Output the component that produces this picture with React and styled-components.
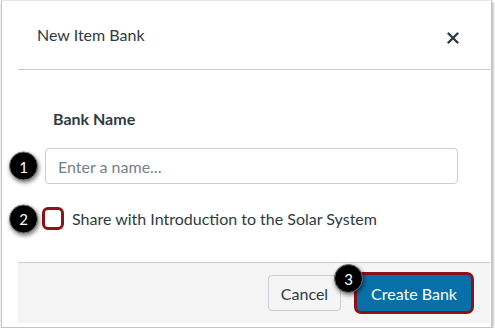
import React from "react";
import styled, { createGlobalStyle } from "styled-components";

const Global = createGlobalStyle`
  body {
    margin: 0;
    background: #ffffff;
    font-family: Lato, "Open Sans", sans-serif;
  }
`;

export default function App() {
  return (
    <>
      <Global />
      <Frame>
        <Dialog>
          <Header>
            <Title>New Item Bank</Title>
            <Close aria-label="Close">
              <svg width="12" height="12" viewBox="0 0 12 12">
                <path d="M1.5 1.5 L10.5 10.5 M10.5 1.5 L1.5 10.5" stroke="#2d3b45" strokeWidth="2.4" strokeLinecap="round" />
              </svg>
            </Close>
          </Header>
          <Body>
            <Label>Bank Name</Label>
            <Row>
              <Badge $left={-36}>1</Badge>
              <Input placeholder="Enter a name..." />
            </Row>
            <CheckRow>
              <Badge $left={-33}>2</Badge>
              <Check />
              <CheckText>Share with Introduction to the Solar System</CheckText>
            </CheckRow>
          </Body>
          <Footer>
            <CancelButton>Cancel</CancelButton>
            <PrimaryWrap>
              <Badge $left={-20} $top={-8}>3</Badge>
              <PrimaryButton>Create Bank</PrimaryButton>
            </PrimaryWrap>
          </Footer>
        </Dialog>
      </Frame>
    </>
  );
}

const Frame = styled.div`
  width: 491px;
  height: 328px;
  border: 1px solid #c4c4c4;
  border-top-color: #e6e6e6;
  box-shadow: 1px 2px 3px rgba(0, 0, 0, 0.35);
  box-sizing: border-box;
  margin-left: 1px;
  background: #fff;
`;

const Dialog = styled.div`
  margin-left: 16px;
  width: 472px;
  display: flex;
  flex-direction: column;
`;

const Header = styled.div`
  height: 69px;
  box-sizing: border-box;
  border-bottom: 1px solid #c7cdd1;
  display: flex;
  align-items: center;
  justify-content: space-between;
  padding: 0 31px 0 19px;
`;

const Title = styled.h2`
  margin: 0 0 1px;
  font-size: 16px;
  font-weight: 400;
  color: #2d3b45;
`;

const Close = styled.button`
  border: 0;
  background: none;
  padding: 0;
  display: flex;
  margin-top: 5px;
`;

const Body = styled.div`
  height: 192px;
  padding: 39px 0 0 27px;
  box-sizing: border-box;
  display: flex;
  flex-direction: column;
`;

const Label = styled.div`
  font-size: 16px;
  font-weight: 700;
  color: #2d3b45;
  margin-left: 8px;
  height: 20px;
`;

const Row = styled.div`
  position: relative;
  margin-top: 19px;
`;

const Input = styled.input`
  width: 413px;
  height: 36px;
  box-sizing: border-box;
  border: 1px solid #c7cdd1;
  border-radius: 4px;
  padding: 0 12px;
  font-family: Lato, sans-serif;
  font-size: 16px;
  color: #2d3b45;
  &::placeholder {
    color: #73818c;
  }
`;

const CheckRow = styled.div`
  position: relative;
  margin-top: 23px;
  display: flex;
  align-items: center;
  gap: 8px;
  margin-left: -3px;
`;

const Check = styled.span`
  width: 22px;
  height: 23px;
  box-sizing: border-box;
  border: 3px solid #8c1118;
  border-radius: 6px;
  background: #fff;
`;

const CheckText = styled.span`
  font-size: 16px;
  color: #2d3b45;
`;

const Badge = styled.span`
  position: absolute;
  left: ${(p) => p.$left}px;
  top: ${(p) => (p.$top === undefined ? "50%" : p.$top + "px")};
  transform: ${(p) => (p.$top === undefined ? "translateY(-50%)" : "none")};
  width: 29px;
  height: 29px;
  border-radius: 50%;
  background: #000;
  color: #fff;
  font-size: 15px;
  display: flex;
  align-items: center;
  justify-content: center;
  box-shadow: 1px 2px 4px rgba(0, 0, 0, 0.55);
  border: 1px solid #777;
  box-sizing: border-box;
  z-index: 2;
`;

const Footer = styled.div`
  height: 61px;
  box-sizing: border-box;
  width: 472px;
  background: #f5f5f5;
  border-top: 1px solid #c7cdd1;
  display: flex;
  align-items: center;
  justify-content: flex-end;
  padding: 0 16px 0 0;
  gap: 13px;
`;

const CancelButton = styled.button`
  width: 73px;
  height: 36px;
  box-sizing: border-box;
  background: #f5f5f5;
  border: 1px solid #c7cdd1;
  border-radius: 4px;
  font-family: Lato, sans-serif;
  font-size: 16px;
  color: #2d3b45;
  padding: 0;
`;

const PrimaryWrap = styled.div`
  position: relative;
  display: flex;
`;

const PrimaryButton = styled.button`
  width: 120px;
  height: 42px;
  box-sizing: border-box;
  background: #0770a8;
  border: 3px solid #8c1118;
  border-radius: 7px;
  font-family: Lato, sans-serif;
  font-size: 16px;
  color: #fff;
  padding: 0;
`;
